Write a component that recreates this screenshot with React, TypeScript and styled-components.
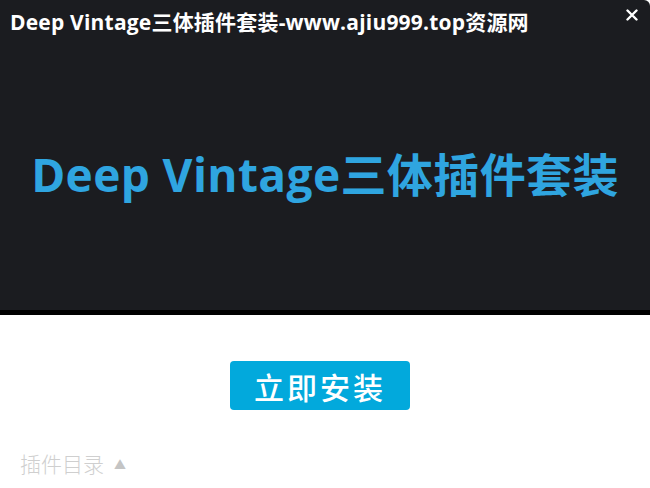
import React from "react";
import styled, { createGlobalStyle } from "styled-components";

const GlobalStyle = createGlobalStyle`
  html, body {
    margin: 0;
    padding: 0;
    background: #ffffff;
    overflow: hidden;
  }
  body {
    font-family: "Open Sans", "Noto Sans CJK SC", sans-serif;
  }
`;

const Window = styled.div`
  width: 650px;
  height: 488px;
  display: flex;
  flex-direction: column;
  overflow: hidden;
`;

const Banner = styled.div`
  height: 310px;
  background: #1b1c20;
  border-top-right-radius: 6px;
  display: flex;
  flex-direction: column;
  position: relative;
`;

const TitleBar = styled.div`
  height: 44px;
  display: flex;
  align-items: center;
  padding: 0 0 0 10px;
`;

const Title = styled.h1`
  margin: 0;
  margin-top: -2px;
  color: #ffffff;
  font-size: 21px;
  font-weight: 700;
  letter-spacing: 0.2px;
  white-space: nowrap;
  font-family: "Open Sans", "Noto Sans CJK SC", sans-serif;
`;

const CloseButton = styled.button`
  position: absolute;
  top: 7px;
  right: 10px;
  width: 16px;
  height: 16px;
  padding: 0;
  border: none;
  background: transparent;
  display: flex;
  align-items: center;
  justify-content: center;
  cursor: pointer;
`;

const Headline = styled.div`
  flex: 1;
  display: flex;
  align-items: center;
  justify-content: center;
  padding-bottom: 10px;
  color: #2fa5e0;
  font-size: 46px;
  font-weight: 700;
  letter-spacing: 0.4px;
  white-space: nowrap;
  font-family: "Open Sans", "Noto Sans CJK SC", sans-serif;
`;

const Divider = styled.div`
  height: 5px;
  background: #000000;
`;

const Body = styled.div`
  flex: 1;
  display: flex;
  flex-direction: column;
  align-items: center;
  padding-top: 46px;
`;

const InstallButton = styled.button`
  width: 180px;
  height: 49px;
  margin-right: 10px;
  border: none;
  border-radius: 4px;
  background: #02a9dc;
  color: #ffffff;
  font-size: 30px;
  font-weight: 500;
  letter-spacing: 3px;
  font-family: "Noto Sans CJK SC", sans-serif;
  display: flex;
  align-items: center;
  justify-content: center;
  cursor: pointer;
`;

const Catalog = styled.div`
  align-self: flex-start;
  margin-top: 38px;
  margin-left: 20px;
  display: flex;
  align-items: center;
  gap: 10px;
  color: #cfcfcf;
  font-size: 21px;
  font-weight: 300;
  font-family: "Noto Sans CJK SC", sans-serif;
`;

const Arrow = styled.span`
  font-size: 12px;
  color: #c4c4c4;
  margin-top: 3px;
`;

export default function App() {
  return (
    <>
      <GlobalStyle />
      <Window>
        <Banner>
          <TitleBar>
            <Title>Deep Vintage三体插件套装-www.ajiu999.top资源网</Title>
          </TitleBar>
          <CloseButton aria-label="close">
            <svg width="12" height="12" viewBox="0 0 12 12">
              <path
                d="M1.5 1.5 L10.5 10.5 M10.5 1.5 L1.5 10.5"
                stroke="#ffffff"
                strokeWidth="2.4"
                strokeLinecap="round"
              />
            </svg>
          </CloseButton>
          <Headline>Deep Vintage三体插件套装</Headline>
        </Banner>
        <Divider />
        <Body>
          <InstallButton>立即安装</InstallButton>
          <Catalog>
            插件目录 <Arrow>▲</Arrow>
          </Catalog>
        </Body>
      </Window>
    </>
  );
}
